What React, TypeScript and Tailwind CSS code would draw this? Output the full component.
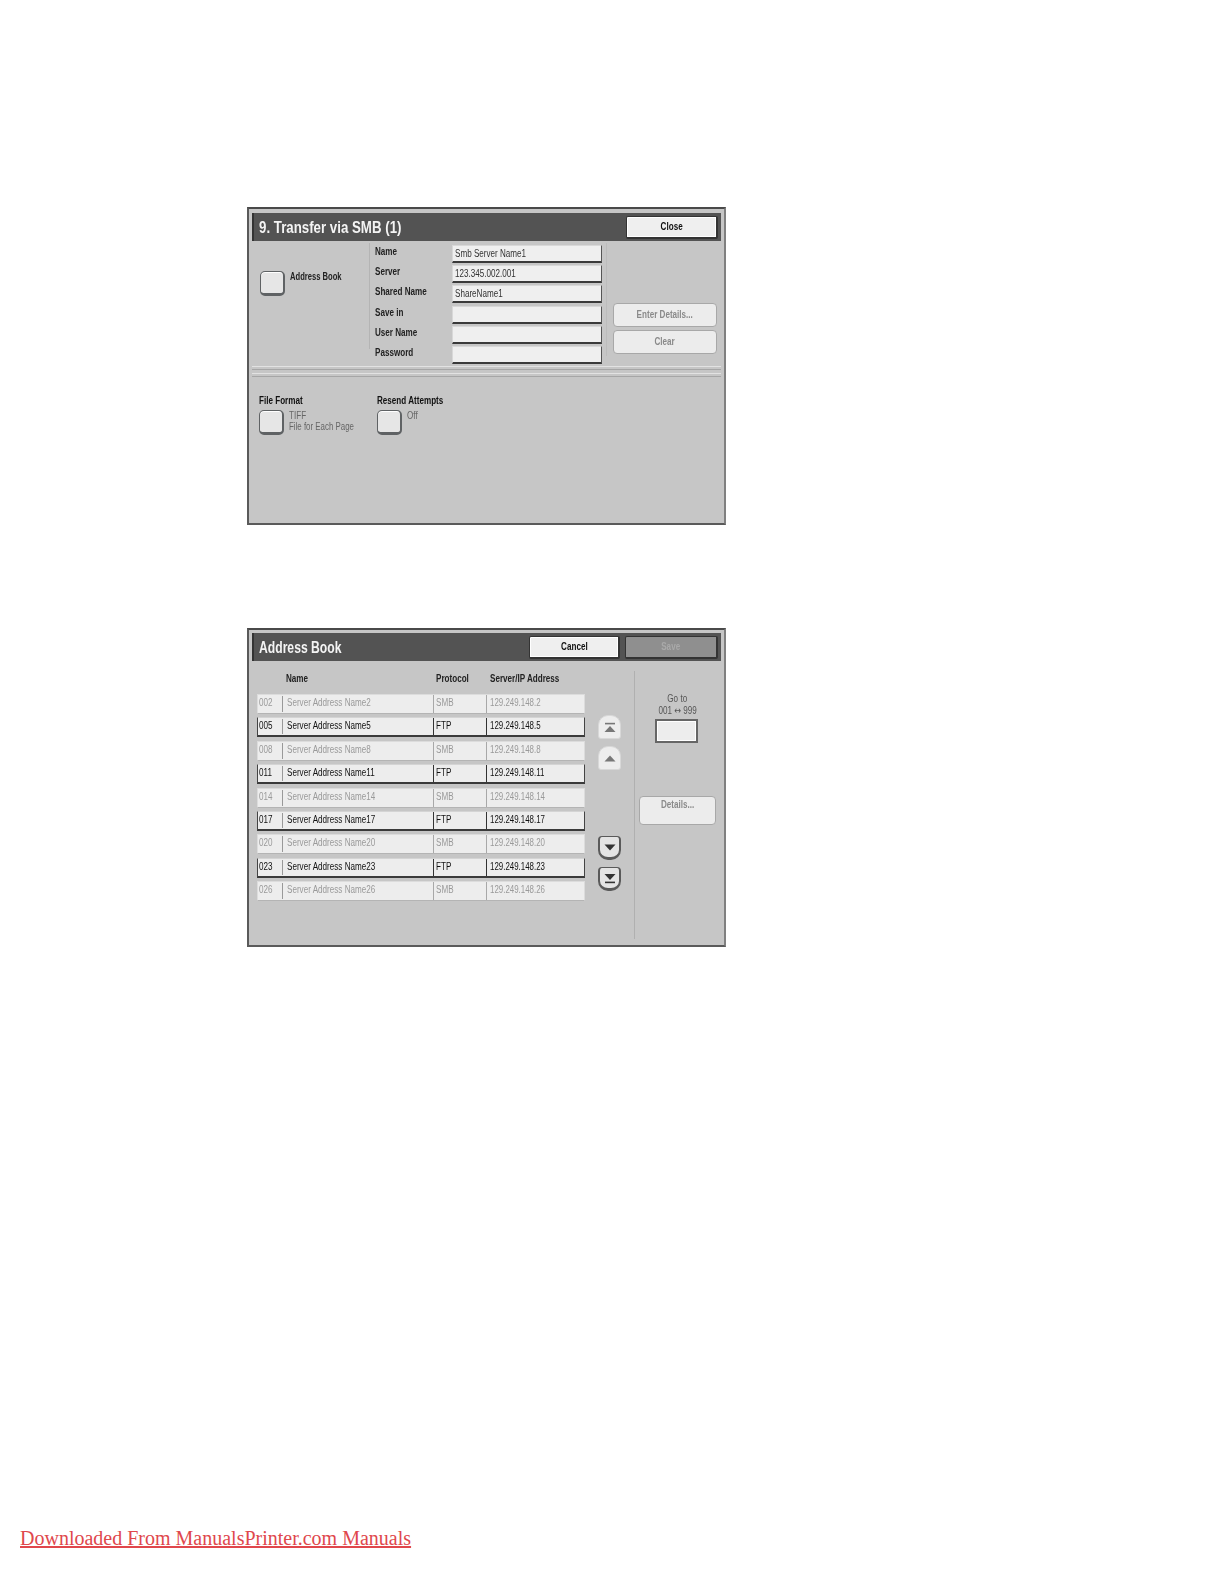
import type { ReactNode } from 'react'

const sans = "font-['Liberation_Sans',Arial,sans-serif]"

// the panel font is a condensed one, Liberation Sans squeezed gets close
function T({ children, center, className = '' }: { children: ReactNode; center?: boolean; className?: string }) {
  return (
    <span
      className={`inline-block whitespace-nowrap ${center ? 'origin-center' : 'origin-left'} ${className || 'scale-x-[0.81]'}`}
    >
      {children}
    </span>
  )
}

function Tile() {
  return (
    <div className="h-[25px] w-[25px] shrink-0 rounded-[5px] border border-[#5f6264] border-b-[3px] border-r-2 bg-[#e6e6e6] shadow-[inset_0_1px_0_#fff]" />
  )
}

function TitleBar({ title, scale, children }: { title: string; scale: string; children: ReactNode }) {
  return (
    <div className="flex h-[28px] items-center justify-between border-l-2 border-l-[#333] bg-[#535353] pl-[5px] pr-[3px]">
      <T className={`pt-[2px] text-[16px] font-bold leading-none text-[#f4f4f4] ${scale}`}>{title}</T>
      <div className="flex gap-[5px]">{children}</div>
    </div>
  )
}

function BarButton({ label, disabled, w }: { label: string; disabled?: boolean; w: string }) {
  return (
    <div
      className={`flex h-[23px] items-center justify-center rounded-[2px] border border-[#333] border-b-2 border-r-2 text-[10px] font-bold ${w} ${
        disabled ? 'bg-[#8f8f8f] text-[#a9a9a9]' : 'bg-[#efefef] text-[#111] shadow-[inset_0_0_0_1px_#fff]'
      }`}
    >
      <T center>{label}</T>
    </div>
  )
}

function GhostButton({ label, className }: { label: string; className: string }) {
  return (
    <div
      className={`rounded-[4px] border border-[#a8a8a8] bg-[#ececec] text-center text-[10px] font-bold text-[#8a8a8a] ${className}`}
    >
      <T center>{label}</T>
    </div>
  )
}

const fields = [
  ['Name', 'Smb Server Name1'],
  ['Server', '123.345.002.001'],
  ['Shared Name', 'ShareName1'],
  ['Save in', ''],
  ['User Name', ''],
  ['Password', ''],
]

function TransferPanel() {
  return (
    <section className="ml-[247px] mt-[207px] h-[318px] w-[479px] border-2 border-[#4a4a4a] border-l-[#5a5a5a] border-r-[#808080] border-b-[#5a5a5a] bg-[#c6c6c6] px-[3px] pt-[4px]">
      <TitleBar title="9. Transfer via SMB (1)" scale="scale-x-[0.83]">
        <BarButton label="Close" w="w-[92px]" />
      </TitleBar>
      <div className="flex h-[125px]">
        <div className="mt-[2px] flex h-[106px] w-[118px] items-start border-r border-[#b4b4b4] pl-[8px] pt-[28px]">
          <Tile />
          <T className="ml-[5px] mt-[1px] scale-x-[0.76] text-[10px] font-bold leading-[10px] text-[#222]">
            Address Book
          </T>
        </div>
        <div className="mt-[2px] flex h-[113px] w-[237px] flex-col gap-[2.2px] border-r border-[#bcbcbc] pl-[5px] pt-[2px]">
          {fields.map(([label, value]) => (
            <div key={label} className="flex h-[18px] items-start">
              <span className="w-[77px] pt-[1px] text-[10px] font-bold leading-[12px] text-[#222]">
                <T>{label}</T>
              </span>
              <div className="h-[18px] w-[150px] border border-[#d8d8d8] border-b-2 border-b-[#3a3a3a] border-r-[#555] bg-[#efefef] pl-[2px] text-[10px] leading-[16px] text-[#333]">
                <T>{value}</T>
              </div>
            </div>
          ))}
        </div>
        <div className="flex flex-col gap-[3px] pl-[6px] pt-[62px]">
          <GhostButton label="Enter Details..." className="h-[24px] w-[104px] leading-[22px]" />
          <GhostButton label="Clear" className="h-[24px] w-[104px] leading-[22px]" />
        </div>
      </div>
      <div className="flex h-[11px] flex-col justify-between">
        <div className="h-px bg-[#e2e2e2]" />
        <div className="h-px bg-[#a6a6a6]" />
        <div className="h-px bg-[#e2e2e2]" />
        <div className="h-px bg-[#a6a6a6]" />
      </div>
      <div className="flex pl-[7px] pt-[19px]">
        <div className="w-[118px]">
          <div className="mb-[4px] text-[10px] font-bold leading-[10px] text-[#111]">
            <T>File Format</T>
          </div>
          <div className="flex items-start">
            <Tile />
            <div className="ml-[5px] text-[10px] leading-[11px] text-[#666]">
              <T>TIFF</T>
              <br />
              <T className="scale-x-[0.79]">File for Each Page</T>
            </div>
          </div>
        </div>
        <div>
          <div className="mb-[4px] text-[10px] font-bold leading-[10px] text-[#111]">
            <T>Resend Attempts</T>
          </div>
          <div className="flex items-start">
            <Tile />
            <div className="ml-[5px] text-[10px] leading-[11px] text-[#666]">
              <T>Off</T>
            </div>
          </div>
        </div>
      </div>
    </section>
  )
}

const rows = [
  ['002', 'Server Address Name2', 'SMB', '129.249.148.2', false],
  ['005', 'Server Address Name5', 'FTP', '129.249.148.5', true],
  ['008', 'Server Address Name8', 'SMB', '129.249.148.8', false],
  ['011', 'Server Address Name11', 'FTP', '129.249.148.11', true],
  ['014', 'Server Address Name14', 'SMB', '129.249.148.14', false],
  ['017', 'Server Address Name17', 'FTP', '129.249.148.17', true],
  ['020', 'Server Address Name20', 'SMB', '129.249.148.20', false],
  ['023', 'Server Address Name23', 'FTP', '129.249.148.23', true],
  ['026', 'Server Address Name26', 'SMB', '129.249.148.26', false],
] as const

function Row({ row }: { row: (typeof rows)[number] }) {
  const [no, name, proto, ip, on] = row
  const cell = on ? 'border-[#333]' : 'border-[#a8a8a8]'
  return (
    <div
      className={`grid h-[20px] w-[328px] grid-cols-[24px_151px_53px_100px] bg-[#ededed] text-[10px] leading-[16px] ${
        on
          ? 'border border-[#d4d4d4] border-b-2 border-b-[#3a3a3a] border-l-[#444] border-r-[#444] text-[#111]'
          : 'border border-[#dcdcdc] border-b-[#b4b4b4] text-[#9a9a9a]'
      }`}
    >
      <div className="pl-[1px]">
        <T>{no}</T>
      </div>
      <div className="my-[1px] border-l border-[#999] pl-[4px] leading-[14px]">
        <T>{name}</T>
      </div>
      <div className={`border-l pl-[2px] ${cell}`}>
        <T>{proto}</T>
      </div>
      <div className={`border-l pl-[3px] ${cell}`}>
        <T className="scale-x-[0.79]">{ip}</T>
      </div>
    </div>
  )
}

function ScrollButton({ down, end }: { down?: boolean; end?: boolean }) {
  return (
    <div
      className={`flex h-[24px] w-[23px] items-center justify-center ${
        down
          ? 'rounded-b-[10px] rounded-t-[4px] border border-[#5a5a5a] border-b-[3px] border-x-2 bg-[#e4e4e4]'
          : 'rounded-t-[10px] rounded-b-[3px] border border-[#d8d8d8] bg-[#ededed]'
      }`}
    >
      <svg width="14" height="13" viewBox="0 0 14 13">
        {down ? (
          <path d={end ? 'M1.5 2h11L7 8z' : 'M1.5 3.5h11L7 9.5z'} fill="#333" />
        ) : (
          <path d={end ? 'M1.5 11h11L7 5z' : 'M1.5 9.5h11L7 3.5z'} fill="#777" />
        )}
        {end && (down ? <path d="M2 9.6h10v1.6H2z" fill="#333" /> : <path d="M2 1.8h10v1.6H2z" fill="#777" />)}
      </svg>
    </div>
  )
}

function AddressPanel() {
  return (
    <section className="ml-[247px] mt-[103px] h-[319px] w-[479px] border-2 border-[#4a4a4a] border-l-[#5a5a5a] border-r-[#808080] border-b-[#5a5a5a] bg-[#c6c6c6] px-[3px] pt-[3px]">
      <TitleBar title="Address Book" scale="scale-x-[0.76]">
        <BarButton label="Cancel" w="w-[91px]" />
        <BarButton label="Save" disabled w="w-[93px]" />
      </TitleBar>
      <div className="flex">
        <div className="mt-[10px] h-[268px] w-[383px] border-r border-[#b0b0b0] pl-[5px]">
          <div className="ml-[29px] flex h-[23px] pt-[2px] text-[10px] font-bold leading-[12px] text-[#222]">
            <span className="w-[150px]">
              <T>Name</T>
            </span>
            <span className="w-[54px]">
              <T>Protocol</T>
            </span>
            <T>Server/IP Address</T>
          </div>
          <div className="flex">
            <div className="flex flex-col gap-[3.4px]">
              {rows.map((r) => (
                <Row key={r[0]} row={r} />
              ))}
            </div>
            <div className="ml-[13px] flex flex-col pt-[21px]">
              <ScrollButton end />
              <div className="mt-[7px]">
                <ScrollButton />
              </div>
              <div className="mt-[66px]">
                <ScrollButton down />
              </div>
              <div className="mt-[7px]">
                <ScrollButton down end />
              </div>
            </div>
          </div>
        </div>
        <div className="flex-1 pl-[4px] pt-[32px]">
          <div className="w-[77px] text-center text-[10px] leading-[12px] text-[#555]">
            <T center>Go to</T>
            <br />
            <T center>
              001 <span className="font-['DejaVu_Sans',sans-serif]">↔</span> 999
            </T>
          </div>
          <div className="ml-[16px] mt-[2px] h-[24px] w-[43px] border-2 border-[#666] bg-[#ededed] shadow-[inset_0_0_0_1px_#fff]" />
          <GhostButton label="Details..." className="mt-[53px] h-[29px] w-[77px] pt-[2px] leading-[12px]" />
        </div>
      </div>
    </section>
  )
}

export default function App() {
  return (
    <div className={`relative h-[1584px] w-[1224px] overflow-hidden bg-white ${sans}`}>
      <div className="flow-root blur-[0.4px]">
        <TransferPanel />
        <AddressPanel />
      </div>
      <a className="ml-[20px] mt-[579px] block w-fit font-['Liberation_Serif',serif] text-[20px] leading-[24px] text-[#e0474c] underline">
        Downloaded From ManualsPrinter.com Manuals
      </a>
    </div>
  )
}
